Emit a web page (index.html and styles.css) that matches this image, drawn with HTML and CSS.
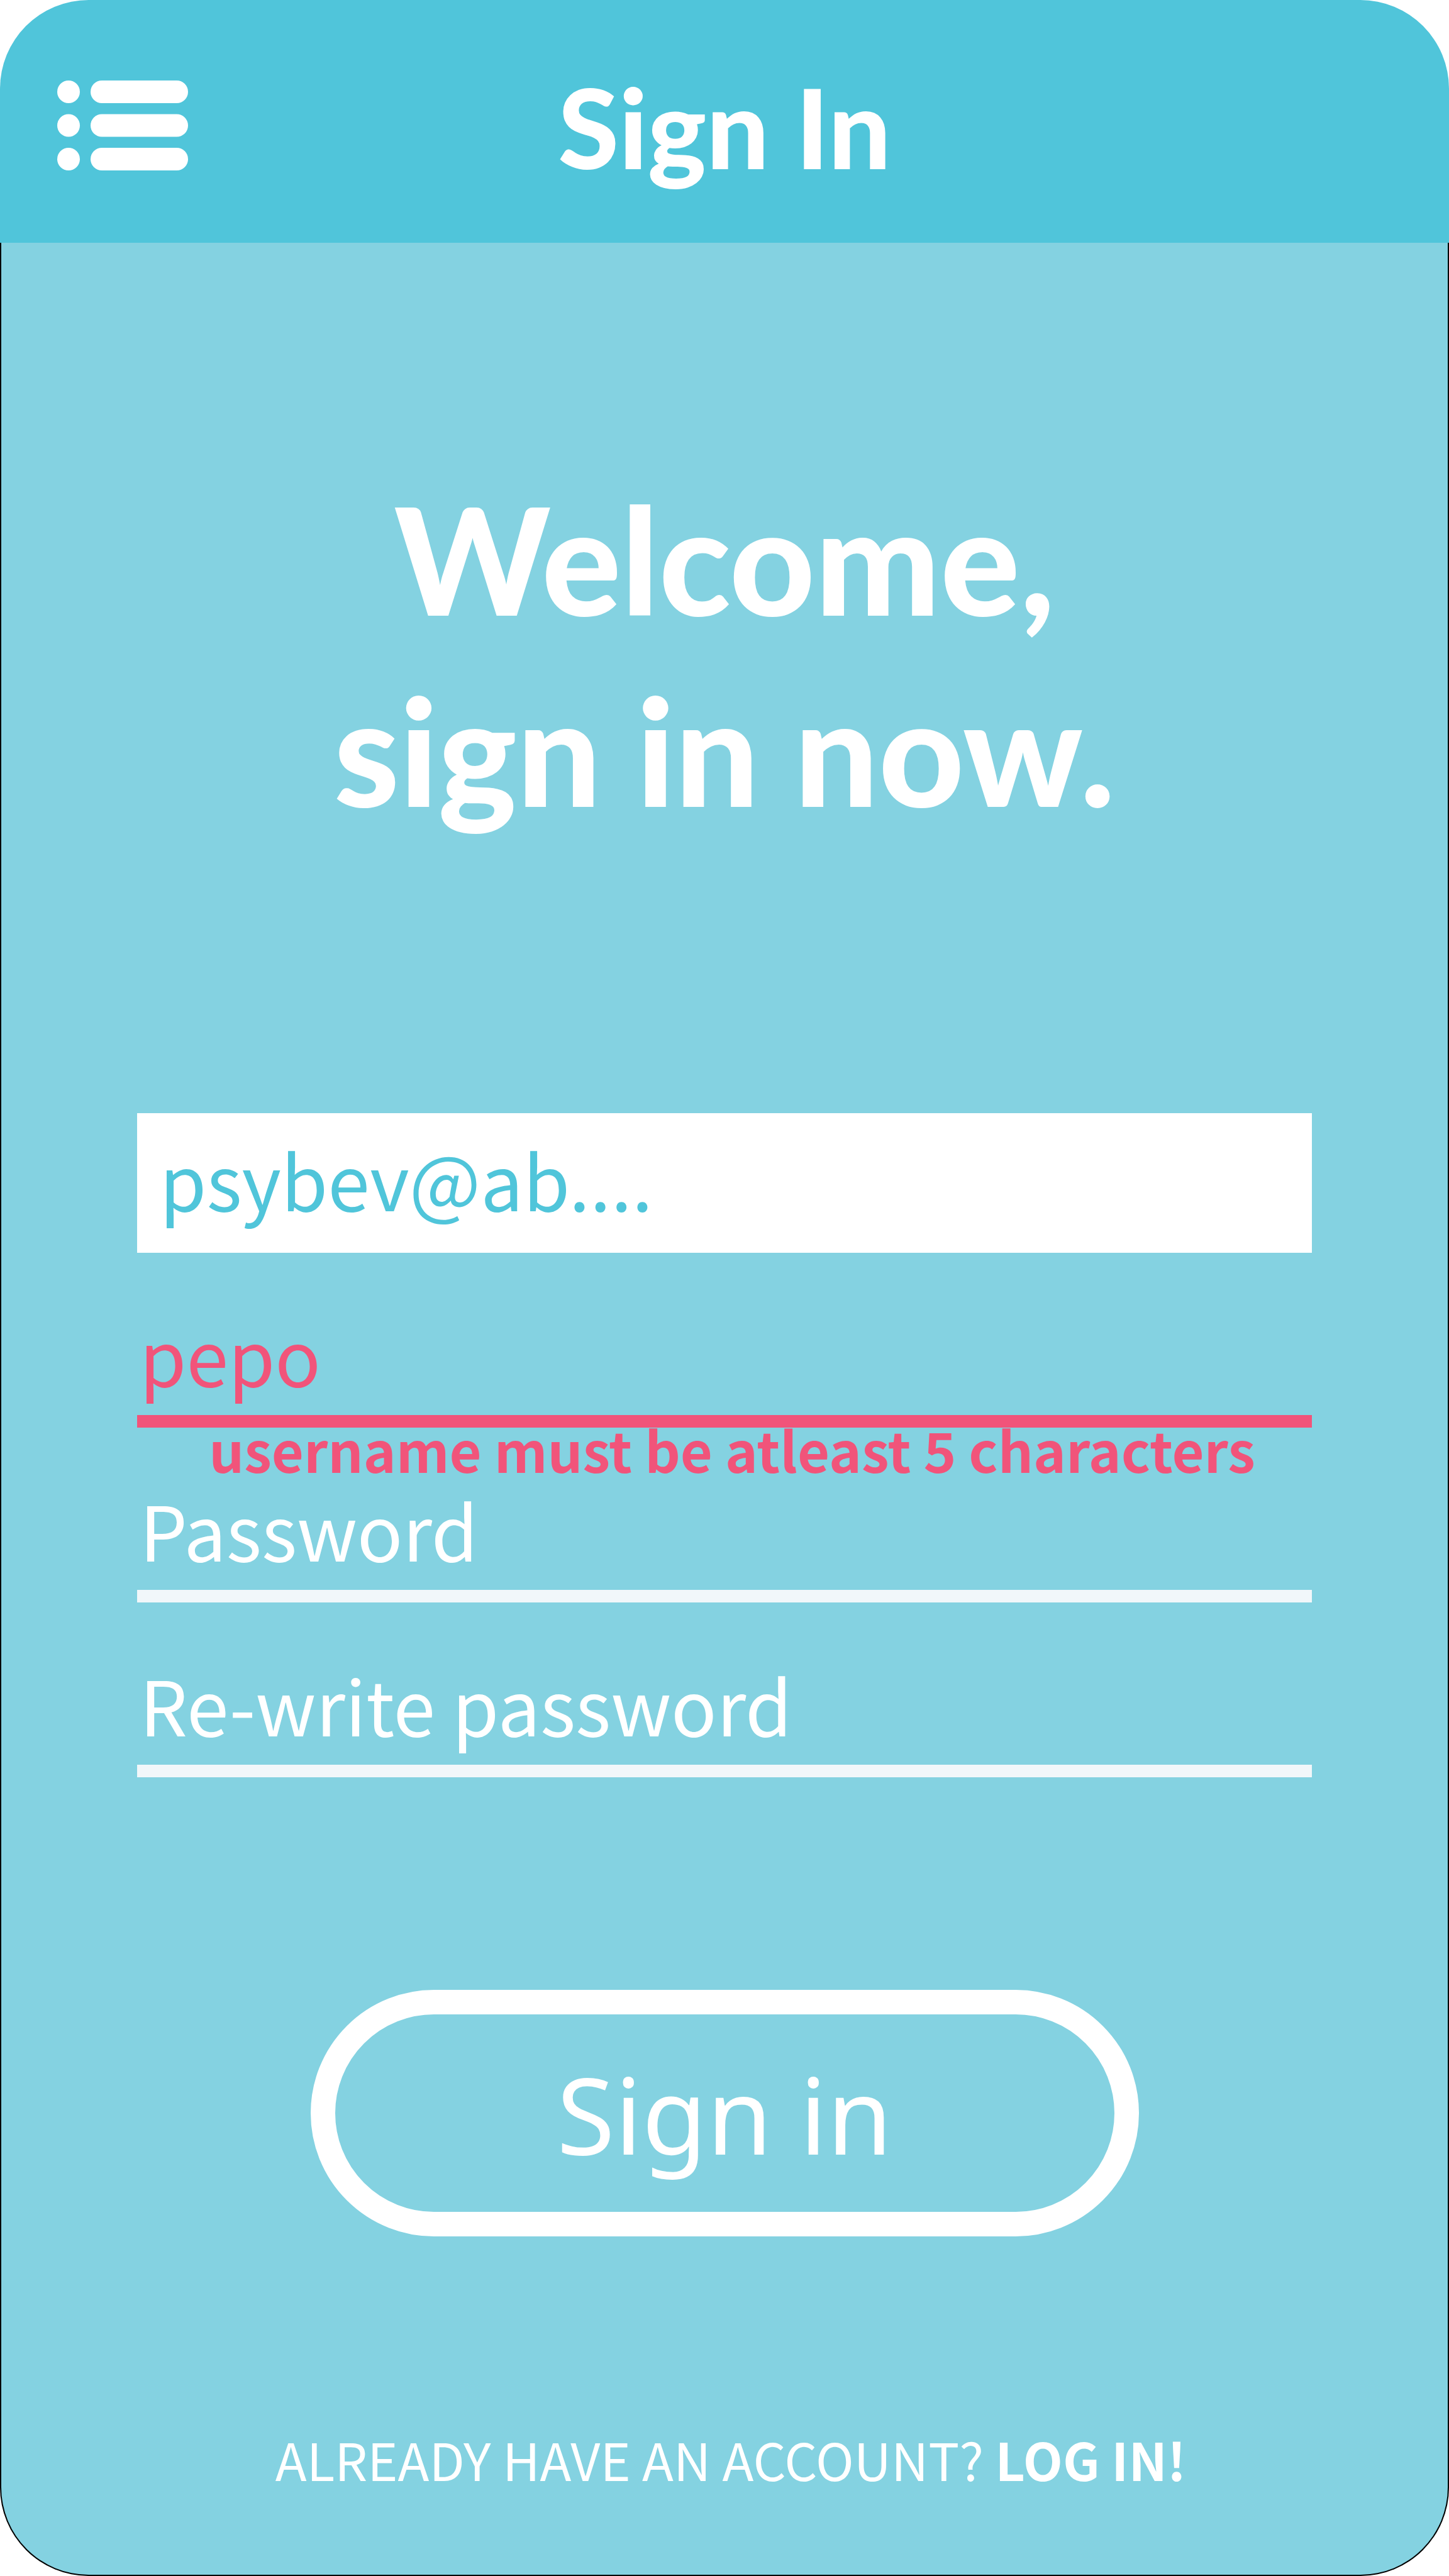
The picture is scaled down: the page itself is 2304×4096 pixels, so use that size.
FILE: index.html
```html
<!DOCTYPE html>
<html lang="en">
<head>
  <meta charset="utf-8">
  <meta name="viewport" content="width=device-width, initial-scale=1">
  <title>Sign In</title>
  <link rel="stylesheet" href="styles.css">
</head>
<body>
  <div class="screen">
    <header class="topbar">
      <button class="menu" type="button" aria-label="Menu">
        <svg class="menu-icon" viewBox="0 0 208 143" aria-hidden="true">
          <circle cx="18" cy="18" r="18"/>
          <circle cx="18" cy="71.5" r="18"/>
          <circle cx="18" cy="125" r="18"/>
          <rect x="53" y="0" width="155" height="36" rx="18"/>
          <rect x="53" y="53.5" width="155" height="36" rx="18"/>
          <rect x="53" y="107" width="155" height="36" rx="18"/>
        </svg>
      </button>
      <h1 class="title">Sign In</h1>
    </header>

    <main class="content">
      <h2 class="welcome">Welcome,<br>sign in now.</h2>

      <form class="form">
        <div class="field field-active">
          <input class="input" type="text" aria-label="Email" value="psybev@ab....">
        </div>
        <div class="field field-invalid">
          <input class="input" type="text" aria-label="Username" aria-describedby="username-error" value="pepo">
          <p class="error" id="username-error">username must be atleast 5 characters</p>
        </div>
        <div class="field">
          <input class="input" type="password" aria-label="Password" placeholder="Password">
        </div>
        <div class="field">
          <input class="input" type="password" aria-label="Re-write password" placeholder="Re-write password">
        </div>
        <button class="submit" type="submit">Sign in</button>
      </form>

      <p class="login">ALREADY HAVE AN ACCOUNT? <a class="login-link" href="#login">LOG IN!</a></p>
    </main>
  </div>
</body>
</html>
```

FILE: styles.css
```css
* {
  box-sizing: border-box;
}

body {
  margin: 0;
  overflow-x: hidden;
  background: #fff;
  color: #fff;
  font-family: "Noto Sans CJK SC", "Open Sans", sans-serif;
}

h1,
h2,
p {
  margin: 0;
}

button,
input {
  font: inherit;
  color: inherit;
}

.screen {
  display: flex;
  flex-direction: column;
  min-height: 100vh;
}

.topbar {
  display: grid;
  grid-template-columns: 1fr auto 1fr;
  align-items: center;
  height: 386px;
  padding: 0 91px;
  border-radius: 141px 141px 0 0;
  background: #50c5da;
}

.menu {
  justify-self: start;
  padding: 12px 0 0;
  border: 0;
  background: none;
}

.menu-icon {
  display: block;
  width: 208px;
  height: 143px;
  fill: #fff;
}

.title,
.welcome {
  font-family: Lato, "Open Sans", sans-serif;
  font-weight: 900;
}

.title {
  padding-top: 16px;
  font-size: 176px;
  line-height: 240px;
}

.content {
  display: flex;
  flex: 1;
  flex-direction: column;
  padding: 350px 216px 124px;
  border: solid #000;
  border-width: 0 2px 2px;
  border-radius: 0 0 141px 141px;
  background: #84d2e1;
}

.welcome {
  font-size: 236px;
  line-height: 304px;
  text-align: center;
}

.form {
  display: flex;
  flex-direction: column;
  margin-top: 426px;
}

.field {
  position: relative;
  display: flex;
  align-items: flex-end;
  height: 278px;
}

.input {
  width: 100%;
  height: 200px;
  padding: 0 4px 14px;
  border: 0;
  border-bottom: 20px solid #f1f7fa;
  border-radius: 0;
  outline: 0;
  background: none;
  font-size: 120px;
}

.input::placeholder {
  color: #fff;
  opacity: 1;
}

.field-active {
  height: 222px;
}

.field-active .input {
  height: 100%;
  padding: 0 36px 14px;
  border: 0;
  background: #fff;
  color: #50c5da;
}

.field-invalid .input {
  border-color: #f1547a;
  color: #f1547a;
}

/* The message hangs below its field without moving the next one. */
.error {
  position: absolute;
  top: 100%;
  left: 0;
  right: 0;
  padding-left: 24px;
  color: #f1547a;
  font-size: 88px;
  font-weight: 700;
  line-height: 68px;
  text-align: center;
  white-space: nowrap;
}

.submit {
  align-self: center;
  width: 1317px;
  max-width: 100%;
  height: 392px;
  margin-top: 338px;
  padding: 0;
  border: 39px solid #fff;
  border-radius: 196px;
  background: none;
  font-family: "Noto Sans", "Open Sans", sans-serif;
  font-size: 168px;
}

.login {
  margin-top: auto;
  padding-left: 20px;
  font-size: 82px;
  line-height: 120px;
  text-align: center;
}

.login-link {
  color: inherit;
  font-weight: 700;
  text-decoration: none;
}
```
